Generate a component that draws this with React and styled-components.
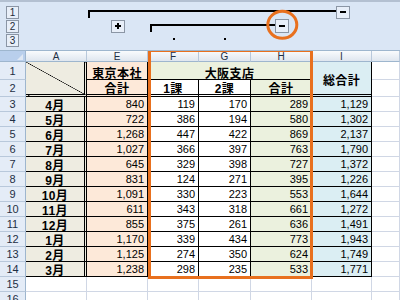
import React from 'react';
import styled, { createGlobalStyle } from 'styled-components';

const COLS = '26px 61px 61px 51px 52px 61px 60px 28px';
const ORANGE = '#e8701e';

const BEIGE = '#eeece1';
const PEACH = '#fde9d9';
const GREEN = '#ebf1de';
const BLUE = '#dbeef3';

const months = ['4月', '5月', '6月', '7月', '8月', '9月', '10月', '11月', '12月', '1月', '2月', '3月'];
const tokyo = [840, 722, 1268, 1027, 645, 831, 1091, 611, 855, 1170, 1125, 1238];
const ka1 = [119, 386, 447, 366, 329, 124, 330, 343, 375, 339, 274, 298];
const ka2 = [170, 194, 422, 397, 398, 271, 223, 318, 261, 434, 350, 235];

const fmt = (n) => n.toLocaleString('en-US');

const borders = {
  grid: '1px solid #d0d7e5',
  black: '1px solid #000',
  double: '3px double #000',
};

export default function App() {
  const cells = [];

  // row 1
  cells.push(<Cell key="a1" $col="2" $row="2 / 4" $bg={BEIGE} $diag $r="double" $b="double" />);
  cells.push(<Cell key="e1" $col="3" $row="2" $bg={PEACH} $r="black" $b="black" $align="center" $bold $low>東京本社</Cell>);
  cells.push(<Cell key="f1" $col="4 / 7" $row="2" $bg={GREEN} $r="black" $b="black" $align="center" $bold $low>大阪支店</Cell>);
  cells.push(<Cell key="i1" $col="7" $row="2 / 4" $bg={BLUE} $r="black" $b="double" $align="center" $bold $low>総合計</Cell>);
  cells.push(<Cell key="j1" $col="8" $row="2" />);

  // row 2
  cells.push(<Cell key="e2" $col="3" $row="3" $bg={PEACH} $r="black" $b="double" $align="center" $bold>合計</Cell>);
  cells.push(<Cell key="f2" $col="4" $row="3" $r="black" $b="double" $align="center" $bold>1課</Cell>);
  cells.push(<Cell key="g2" $col="5" $row="3" $r="black" $b="double" $align="center" $bold>2課</Cell>);
  cells.push(<Cell key="h2" $col="6" $row="3" $bg={GREEN} $r="black" $b="double" $align="center" $bold>合計</Cell>);
  cells.push(<Cell key="j2" $col="8" $row="3" />);

  months.forEach((m, i) => {
    const row = String(i + 4);
    const h = ka1[i] + ka2[i];
    cells.push(<Cell key={'a' + row} $col="2" $row={row} $bg={BEIGE} $r="double" $b="black" $align="center" $bold>{m}</Cell>);
    cells.push(<Cell key={'e' + row} $col="3" $row={row} $bg={PEACH} $r="black" $b="black" $align="right">{fmt(tokyo[i])}</Cell>);
    cells.push(<Cell key={'f' + row} $col="4" $row={row} $r="black" $b="black" $align="right">{fmt(ka1[i])}</Cell>);
    cells.push(<Cell key={'g' + row} $col="5" $row={row} $r="black" $b="black" $align="right">{fmt(ka2[i])}</Cell>);
    cells.push(<Cell key={'h' + row} $col="6" $row={row} $bg={GREEN} $r="black" $b="black" $align="right">{fmt(h)}</Cell>);
    cells.push(<Cell key={'i' + row} $col="7" $row={row} $bg={BLUE} $r="black" $b="black" $align="right">{fmt(tokyo[i] + h)}</Cell>);
    cells.push(<Cell key={'j' + row} $col="8" $row={row} />);
  });

  [16, 17].forEach((row) => {
    [2, 3, 4, 5, 6, 7, 8].forEach((col) => {
      cells.push(<Cell key={`x${row}-${col}`} $col={String(col)} $row={String(row)} />);
    });
  });

  return (
    <Frame>
      <GlobalStyle />
      <OutlineArea>
        <LevelButton $row={1}>1</LevelButton>
        <LevelButton $row={2}>2</LevelButton>
        <LevelButton $row={3}>3</LevelButton>

        <OutlineBar $cols="3 / 8" $row={1} $pl={1} $pr={22}>
          <BarLine />
          <Toggle />
        </OutlineBar>

        <Toggle $plus $col={3} $row={2} />

        <OutlineBar $cols="4 / 7" $row={2} $pl={2} $pr={23}>
          <BarLine />
          <Toggle $circled $tall />
        </OutlineBar>

        <Dot $col={4} />
        <Dot $col={5} />
      </OutlineArea>

      <Sheet>
        <Corner />
        {['A', 'E', 'F', 'G', 'H', 'I', ''].map((c, i) => (
          <ColHeader key={i} $col={i + 2}>{c}</ColHeader>
        ))}
        {Array.from({ length: 16 }, (_, i) => (
          <RowHeader key={i} $row={i + 2}>{i + 1}</RowHeader>
        ))}
        {cells}
        <Highlight />
      </Sheet>
    </Frame>
  );
}

const GlobalStyle = createGlobalStyle`
  html, body {
    margin: 0;
    padding: 0;
    background: #fff;
    overflow: hidden;
  }
`;

const Frame = styled.div`
  width: 400px;
  height: 300px;
  overflow: hidden;
  display: flex;
  flex-direction: column;
  font-family: "Liberation Sans", "Noto Sans CJK JP", sans-serif;
`;

const OutlineArea = styled.div`
  position: relative;
  z-index: 3;
  height: 51px;
  box-sizing: border-box;
  flex-shrink: 0;
  border-top: 2px solid #b3c0d1;
  border-bottom: 1px solid #9eb6ce;
  padding-top: 3px;
  background: #dae6f5;
  display: grid;
  grid-template-columns: ${COLS};
  grid-template-rows: 14px 14px 14px;
`;

const LevelButton = styled.div`
  grid-column: 1;
  grid-row: ${(p) => p.$row};
  justify-self: start;
  align-self: center;
  margin-left: 6px;
  width: 13px;
  height: 13px;
  box-sizing: border-box;
  border: 1px solid #8b96a5;
  background: #e8eff9;
  color: #1f2b3a;
  font-size: 10px;
  line-height: 11px;
  text-align: center;
`;

const OutlineBar = styled.div`
  grid-column: ${(p) => p.$cols};
  grid-row: ${(p) => p.$row};
  display: flex;
  align-items: center;
  padding-left: ${(p) => p.$pl}px;
  padding-right: ${(p) => p.$pr}px;
`;

const BarLine = styled.div`
  flex: 1;
  align-self: flex-start;
  margin-top: 5px;
  height: 6px;
  border-top: 2px solid #000;
  border-left: 2px solid #000;
`;

const Toggle = styled.div`
  position: relative;
  grid-column: ${(p) => p.$col || 'auto'};
  grid-row: ${(p) => p.$row || 'auto'};
  justify-self: center;
  align-self: center;
  width: 14px;
  height: ${(p) => (p.$tall ? 14 : 13)}px;
  box-sizing: border-box;
  border: 1px solid #8b96a5;
  background: #e8eff9;
  flex-shrink: 0;

  &::before {
    content: '';
    position: absolute;
    left: 3px;
    top: 50%;
    width: 6px;
    height: 2px;
    margin-top: -1px;
    background: #000;
  }

  &::after {
    content: '';
    position: absolute;
    display: ${(p) => (p.$plus || p.$circled ? 'block' : 'none')};
    ${(p) =>
      p.$plus
        ? `left: 5px; top: 50%; width: 2px; height: 6px; margin-top: -3px; background: #000;`
        : `left: 50%; top: 50%; width: 32px; height: 30px; box-sizing: border-box;
           transform: translate(-49%, -54%); border: 3px solid ${ORANGE}; border-radius: 50%;`}
  }
`;

const Dot = styled.div`
  grid-column: ${(p) => p.$col};
  grid-row: 3;
  justify-self: center;
  align-self: start;
  margin-top: 5px;
  width: 2px;
  height: 2px;
  background: #000;
`;

const Sheet = styled.div`
  position: relative;
  display: grid;
  grid-template-columns: ${COLS};
  grid-template-rows: 11px 18px 17px repeat(14, 15px);
`;

const Corner = styled.div`
  grid-column: 1;
  grid-row: 1;
  position: relative;
  background: #b9cfec;
  border-right: 1px solid #9eb6ce;
  border-bottom: 1px solid #9eb6ce;

  &::after {
    content: '';
    position: absolute;
    right: 2px;
    bottom: 1px;
    border-left: 6px solid transparent;
    border-bottom: 6px solid #dfe8f4;
  }
`;

const ColHeader = styled.div`
  grid-column: ${(p) => p.$col};
  grid-row: 1;
  background: linear-gradient(#f9fbfd, #dfe6ef);
  border-right: 1px solid #b8c8db;
  border-bottom: 1px solid #9eb6ce;
  color: #1e2f44;
  font-size: 10px;
  line-height: 11px;
  text-align: center;
  overflow: hidden;
`;

const RowHeader = styled.div`
  grid-column: 1;
  grid-row: ${(p) => p.$row};
  background: #e4ecf7;
  border-right: 1px solid #9eb6ce;
  border-bottom: 1px solid #b8c8db;
  color: #1e2f44;
  font-size: 11px;
  display: flex;
  align-items: center;
  justify-content: center;
`;

const Cell = styled.div`
  grid-column: ${(p) => p.$col};
  grid-row: ${(p) => p.$row};
  box-sizing: border-box;
  min-width: 0;
  overflow: hidden;
  white-space: nowrap;
  background: ${(p) =>
    p.$diag
      ? `linear-gradient(to top right, ${p.$bg} calc(50% - 0.6px), #000 50%, ${p.$bg} calc(50% + 0.6px))`
      : p.$bg || '#fff'};
  border-right: ${(p) => borders[p.$r || 'grid']};
  border-bottom: ${(p) => borders[p.$b || 'grid']};
  display: flex;
  align-items: center;
  justify-content: ${(p) =>
    p.$align === 'right' ? 'flex-end' : p.$align === 'center' ? 'center' : 'flex-start'};
  padding: ${(p) => (p.$low ? '3px 3px 0' : '0 3px')};
  color: #000;
  font-size: ${(p) => (p.$bold ? 12 : 11)}px;
  font-weight: ${(p) => (p.$bold ? 700 : 400)};
  letter-spacing: ${(p) => (p.$bold ? '0.4px' : '0')};
`;

const Highlight = styled.div`
  grid-column: 4 / 7;
  grid-row: 1 / 16;
  margin: -2px -1px -2px 0;
  border: 3px solid ${ORANGE};
  z-index: 2;
  pointer-events: none;
`;
